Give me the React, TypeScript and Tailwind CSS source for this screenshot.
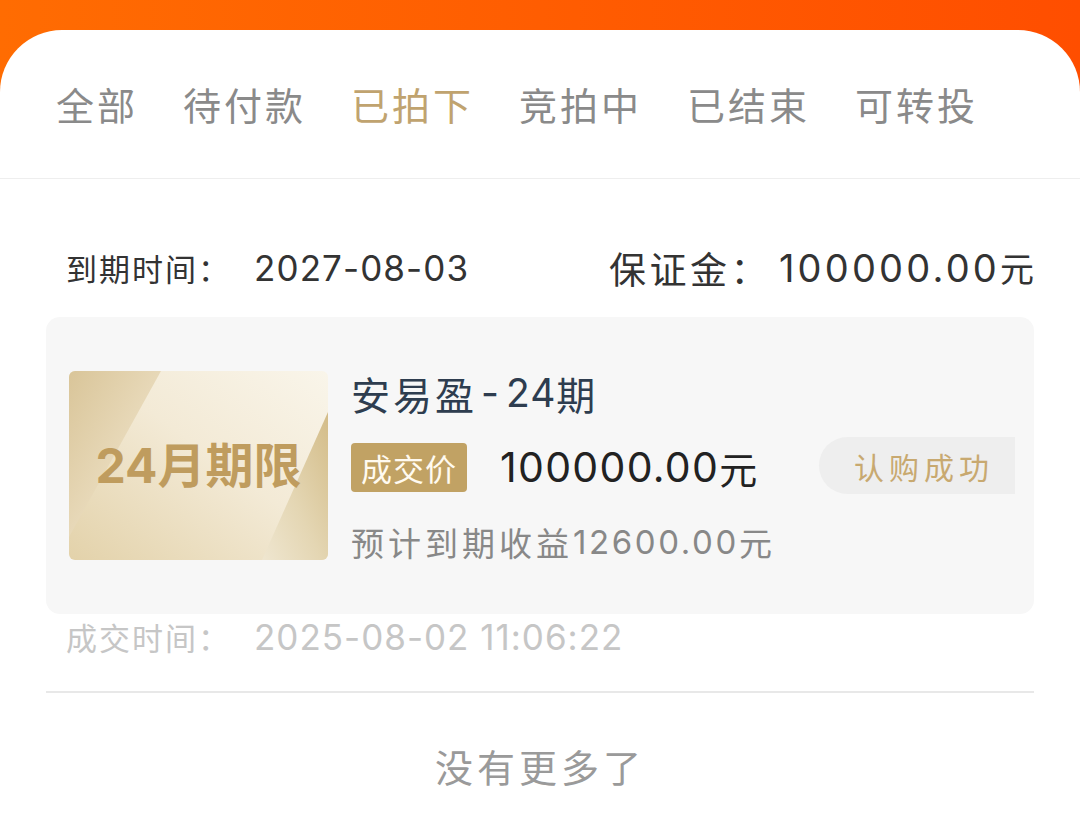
const tabs = ["全部", "待付款", "已拍下", "竞拍中", "已结束", "可转投"];

function Thumb() {
  return (
    <div className="relative flex h-[189px] w-[259px] shrink-0 items-center justify-center overflow-hidden rounded-[6px]">
      <svg
        viewBox="0 0 259 189"
        preserveAspectRatio="none"
        className="absolute inset-0 h-full w-full"
      >
        <defs>
          <linearGradient id="thumbBase" x1="1" y1="0" x2="0" y2="1">
            <stop offset="0" stopColor="#f9f5ea" />
            <stop offset="0.45" stopColor="#f3ead6" />
            <stop offset="1" stopColor="#e3d2aa" />
          </linearGradient>
          <linearGradient id="thumbLeft" x1="0" y1="0" x2="1" y2="1">
            <stop offset="0" stopColor="#d9c599" />
            <stop offset="0.6" stopColor="#eadcbe" />
            <stop offset="1" stopColor="#efe5cd" />
          </linearGradient>
          <linearGradient id="thumbRight" x1="1" y1="0" x2="0" y2="1">
            <stop offset="0" stopColor="#d3bc88" />
            <stop offset="0.55" stopColor="#e4d6b3" />
            <stop offset="1" stopColor="#efe6d0" />
          </linearGradient>
        </defs>
        <rect width="259" height="189" fill="url(#thumbBase)" />
        <polygon points="0,0 92,0 0,166" fill="url(#thumbLeft)" />
        <polygon points="259,41 259,189 193,189" fill="url(#thumbRight)" />
      </svg>
      <span className="relative font-['Inter','Noto_Sans_CJK_SC',sans-serif] text-[48px] leading-[56px] font-bold text-[#bf9c5e]">
        24月期限
      </span>
    </div>
  );
}

export default function App() {
  return (
    <div className="min-h-[836px] w-[1080px] bg-[linear-gradient(90deg,#ff6c02,#ff4e00)] pt-[30px] font-['Noto_Sans_CJK_SC',sans-serif]">
      <div className="min-h-[806px] rounded-t-[62px] bg-white">
        {/* tabs */}
        <div className="flex h-[149px] items-center gap-[45px] border-b border-[#eeeeee] pl-[56px]">
          {tabs.map((t) => (
            <span
              key={t}
              className={
                t === "已拍下"
                  ? "text-[38px] leading-[48px] tracking-[3px] text-[#c0a36f]"
                  : "text-[38px] leading-[48px] tracking-[3px] text-[#8a8a8a]"
              }
            >
              {t}
            </span>
          ))}
        </div>

        <div className="px-[46px]">
          {/* due date + deposit */}
          <div className="mt-[65px] flex h-[48px] items-center justify-between pl-[20px] text-[#333333]">
            <div className="flex items-center">
              <span className="text-[31px] leading-[48px] tracking-[2px]">到期时间：</span>
              <span className="ml-[23px] font-['Inter',sans-serif] text-[35px] leading-[48px] tracking-[1.1px]">
                2027-08-03
              </span>
            </div>
            <div className="flex items-center">
              <span className="text-[37px] leading-[48px] tracking-[3.5px]">保证金：</span>
              <span className="ml-[8px] font-['Inter',sans-serif] text-[38px] leading-[48px] tracking-[3.2px]">
                100000.00
              </span>
              <span className="text-[34px] leading-[48px]">元</span>
            </div>
          </div>

          {/* order card */}
          <div className="mt-[25px] flex items-center rounded-[14px] bg-[#f7f7f7] py-[52px] pl-[23px] pr-[19px]">
            <Thumb />
            <div className="ml-[23px] flex flex-col self-start">
              <div className="flex items-center text-[39px] leading-[48px] tracking-[3px] text-[#2e3d4f]">
                <span>安易盈</span>
                <span className="mx-[4px] font-['Inter',sans-serif]">-</span>
                <span className="font-['Inter',sans-serif] tracking-[1px]">24</span>
                <span>期</span>
              </div>
              <div className="mt-[26px] flex items-center">
                <span className="flex h-[49px] w-[116px] items-center justify-center rounded-[4px] bg-[#c1a264] text-[31px] leading-[40px] tracking-[1px] text-[#fffaf0]">
                  成交价
                </span>
                <span className="ml-[33px] font-['Inter',sans-serif] text-[41px] leading-[49px] tracking-[1.3px] text-[#222222]">
                  100000.00
                </span>
                <span className="text-[38px] leading-[49px] text-[#222222]">元</span>
              </div>
              <div className="mt-[30px] flex items-center text-[#888888]">
                <span className="text-[33px] leading-[40px] tracking-[4px]">预计到期收益</span>
                <span className="font-['Inter',sans-serif] text-[33px] leading-[40px] tracking-[2.6px]">12600.00</span>
                <span className="text-[33px] leading-[40px]">元</span>
              </div>
            </div>
            <div className="ml-auto flex h-[57px] w-[196px] items-center rounded-l-full bg-[#eeeeee] pl-[35px] text-[30px] leading-[40px] tracking-[5px] text-[#c8a970]">
              认购成功
            </div>
          </div>

          {/* deal time */}
          <div className="mt-[3px] flex items-center pl-[20px] text-[#c6c6c6]">
            <span className="text-[31px] leading-[40px] tracking-[2px]">成交时间：</span>
            <span className="ml-[23px] font-['Inter',sans-serif] text-[35px] leading-[40px] tracking-[1px]">
              2025-08-02 11:06:22
            </span>
          </div>

          <div className="mt-[34px] h-[2px] bg-[#e8e8e8]" />

          <div className="mt-[48px] text-center text-[38px] leading-[50px] tracking-[4px] text-[#9a9a9a]">
            没有更多了
          </div>
        </div>
      </div>
    </div>
  );
}
